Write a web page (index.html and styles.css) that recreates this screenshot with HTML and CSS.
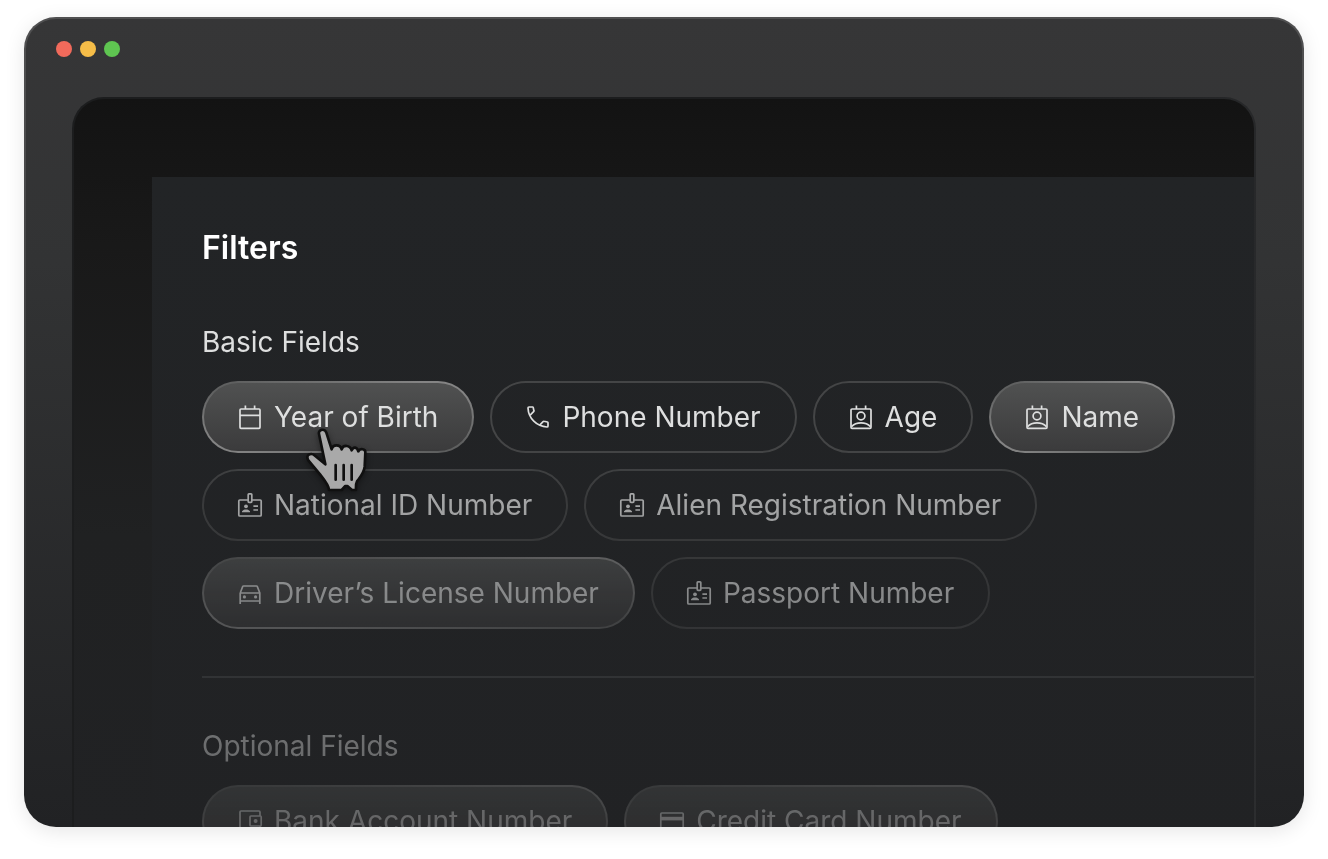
FILE: index.html
```html
<!DOCTYPE html>
<html lang="en">
<head>
<meta charset="utf-8">
<meta name="viewport" content="width=device-width, initial-scale=1">
<title>Filters</title>
<link rel="stylesheet" href="styles.css">
</head>
<body>
<svg class="sprite" aria-hidden="true">
  <symbol id="i-calendar" viewBox="0 0 28 28"><rect x="4" y="6" width="20" height="19.3" rx="1"/><path d="M4 12.4H24M9.4 6V2.6M18.6 6V2.6"/></symbol>
  <symbol id="i-contact" viewBox="0 0 28 28"><rect x="4" y="6" width="20" height="19.3" rx="1"/><path d="M9.4 6V2.6M18.6 6V2.6M4.5 23.6C7 21 10.5 19.9 14 19.9S21 21 23.5 23.6"/><circle cx="14" cy="13" r="3.9"/></symbol>
  <symbol id="i-phone" viewBox="0 0 28 28"><path d="M9 4H5C4.4 4 4 4.4 4 5C4.4 15.3 12.7 23.6 23 24C23.6 24 24 23.6 24 23V19.8C24 19.4 23.8 19.1 23.4 19L20 18.3C19.7 18.2 19.4 18.3 19.1 18.6L16.2 21.6M6.4 11.8L9.6 8.7C9.9 8.4 10 8.1 9.9 7.8L9.3 4.8C9.2 4.3 9 4 8.600 4"/></symbol>
  <symbol id="i-badge" viewBox="0 0 28 28"><path d="M12.2 9H3.8C3.2 9 2.8 9.4 2.8 10V24C2.8 24.6 3.2 25 3.8 25H24.2C24.8 25 25.2 24.6 25.2 24V10C25.2 9.4 24.8 9 24.2 9H15.8"/><rect x="12.2" y="2.800" width="3.600" height="8.600" rx=".8"/><path d="M17.4 15.2H22M17.4 19H22"/><g class="solid"><circle cx="10" cy="15.3" r="1.9"/><path d="M6 21.2V20.2C7.200 18.900 8.600 18.500 10 18.500S12.800 18.900 14 20.200V21.200Z"/></g></symbol>
  <symbol id="i-car" viewBox="0 0 28 28"><path d="M4.2 14L6.7 7.6C6.8 7.2 7.2 7 7.6 7H20.4C20.8 7 21.2 7.2 21.3 7.6L23.8 14V25M4.2 14V25M4.2 14H23.8M4.2 22H23.8"/><g class="solid"><circle cx="8.4" cy="17.9" r="1.6"/><circle cx="19.6" cy="17.9" r="1.6"/></g></symbol>
  <symbol id="i-wallet" viewBox="0 0 28 28"><path d="M24 9V5C24 4.4 23.6 4 23 4H5C4.4 4 4 4.4 4 5V23C4 23.6 4.4 24 5 24H23C23.6 24 24 23.6 24 23V19"/><rect x="14" y="9" width="11.2" height="10" rx="1"/><circle class="solid" cx="19.6" cy="14" r="2"/></symbol>
  <symbol id="i-card" viewBox="0 0 28 28"><rect x="2.8" y="6" width="22.4" height="16.6" rx="1"/><path class="solid" d="M2.8 9.8H25.2V13.4H2.8Z"/></symbol>
</svg>

<main class="window">
  <header class="titlebar">
    <span class="light red"></span><span class="light yellow"></span><span class="light green"></span>
  </header>
  <div class="screen">
    <div class="panel">
      <div class="content">
        <h1 class="title">Filters</h1>
        <section class="group">
          <h2 class="label">Basic Fields</h2>
          <div class="chips">
            <button class="chip" type="button" aria-pressed="true"><svg class="icon" aria-hidden="true"><use href="#i-calendar"/></svg>Year of Birth</button>
            <button class="chip" type="button" aria-pressed="false"><svg class="icon" aria-hidden="true"><use href="#i-phone"/></svg>Phone Number</button>
            <button class="chip" type="button" aria-pressed="false"><svg class="icon" aria-hidden="true"><use href="#i-contact"/></svg>Age</button>
            <button class="chip" type="button" aria-pressed="true"><svg class="icon" aria-hidden="true"><use href="#i-contact"/></svg>Name</button>
            <button class="chip" type="button" aria-pressed="false"><svg class="icon" aria-hidden="true"><use href="#i-badge"/></svg>National ID Number</button>
            <button class="chip" type="button" aria-pressed="false"><svg class="icon" aria-hidden="true"><use href="#i-badge"/></svg>Alien Registration Number</button>
            <button class="chip" type="button" aria-pressed="true"><svg class="icon" aria-hidden="true"><use href="#i-car"/></svg>Driver’s License Number</button>
            <button class="chip" type="button" aria-pressed="false"><svg class="icon" aria-hidden="true"><use href="#i-badge"/></svg>Passport Number</button>
          </div>
        </section>
        <section class="group">
          <h2 class="label">Optional Fields</h2>
          <div class="chips">
            <button class="chip" type="button" aria-pressed="true"><svg class="icon" aria-hidden="true"><use href="#i-wallet"/></svg>Bank Account Number</button>
            <button class="chip" type="button" aria-pressed="true"><svg class="icon" aria-hidden="true"><use href="#i-card"/></svg>Credit Card Number</button>
          </div>
        </section>
      </div>
      <svg class="cursor" viewBox="0 0 240 240" aria-hidden="true">
        <path class="hand" d="M57 42C54 28 74 24 79 38L95 88C98 72 121 72 125 88C129 74 150 74 155 91C160 79 171 80 175 94C180 84 197 86 196 98L194 140C192 160 180 172 171 184C167 191 168 199 168 210H156L142 198H136L125 210H87C87 196 72 178 60 163L25 121C15 104 33 97 45 107L76 133Z"/>
        <path class="creases" d="M107 135V179M131 135V179M155 135V179"/>
      </svg>
    </div>
  </div>
</main>
</body>
</html>
```
FILE: styles.css
```css
* { box-sizing: border-box; }

body {
  margin: 0;
  padding: 17px 24px 32px;
  height: 100vh;
  background: #fff;
  color: #dedfdf;
  font-family: Inter, "Liberation Sans", sans-serif;
}

.sprite { position: absolute; width: 0; height: 0; }

.window {
  display: flex;
  flex-direction: column;
  height: 100%;
  overflow: hidden;
  border: 2px solid transparent;
  border-bottom: 0;
  border-radius: 32px;
  background:
    linear-gradient(#363637, #323334 30%, #212224) padding-box,
    linear-gradient(#505051, #454546 30%, #212224) border-box;
  box-shadow: 0 4px 20px rgba(0, 0, 0, .1);
}

.titlebar {
  display: flex;
  flex: none;
  gap: 8px;
  height: 78px;
  padding: 22px 30px;
}

.light { width: 16px; height: 16px; border-radius: 50%; }
.red { background: #f16a5b; }
.yellow { background: #f6bd48; }
.green { background: #5fc551; }

.screen {
  flex: 1;
  min-height: 0;
  margin: 0 46px;
  padding: 78px 0 0 78px;
  overflow: hidden;
  border: 2px solid transparent;
  border-bottom: 0;
  border-radius: 32px 32px 0 0;
  background:
    linear-gradient(#131313, #191919 20%, #202122 60%, #212224) padding-box,
    linear-gradient(100deg, #1c1d1e 70%, #2c2d2f) border-box;
}

.panel {
  position: relative;
  min-height: 100%;
  background: linear-gradient(#222426, #212224);
}

.content {
  padding: 51px 0 0 50px;
  -webkit-mask-image: linear-gradient(#000 270px, rgba(0, 0, 0, .7) 320px, rgba(0, 0, 0, .54) 420px, rgba(0, 0, 0, .4) 570px, rgba(0, 0, 0, .36) 650px);
  mask-image: linear-gradient(#000 270px, rgba(0, 0, 0, .7) 320px, rgba(0, 0, 0, .54) 420px, rgba(0, 0, 0, .4) 570px, rgba(0, 0, 0, .36) 650px);
}

.title {
  margin: 0 0 54px;
  color: #fff;
  font-size: 32px;
  font-weight: 600;
  line-height: 40px;
}

.group + .group {
  margin-top: 47px;
  padding-top: 48px;
  border-top: 2px solid #454648;
}

.label {
  margin: 0 0 19px;
  font-size: 28px;
  font-weight: 400;
  line-height: 40px;
}

.chips { display: flex; flex-wrap: wrap; gap: 16px; }

.chip {
  display: flex;
  align-items: center;
  gap: 10px;
  height: 72px;
  padding: 0 34px 0 32px;
  border: 2px solid #444546;
  border-radius: 36px;
  background: none;
  color: inherit;
  font: inherit;
  font-size: 28px;
  white-space: nowrap;
}

.chip[aria-pressed="true"] {
  border-color: transparent;
  background:
    linear-gradient(#505151, #3b3b3c) padding-box,
    linear-gradient(to top right, #848484 10%, #5f6060 45%, #5f6060 55%, #848484 90%) border-box;
}

.icon {
  flex: none;
  width: 28px;
  height: 28px;
  fill: none;
  stroke: currentColor;
  stroke-width: 1.7;
}

.solid { fill: currentColor; stroke: none; }

.cursor {
  position: absolute;
  top: 243px;
  left: 148px;
  width: 80px;
  height: 80px;
  filter: drop-shadow(0 2px 3px rgba(0, 0, 0, .4));
}

.hand { fill: #a9a9a9; stroke: #101010; stroke-width: 8; stroke-linejoin: round; }
.creases { fill: none; stroke: #101010; stroke-width: 8; stroke-linecap: round; }
```
